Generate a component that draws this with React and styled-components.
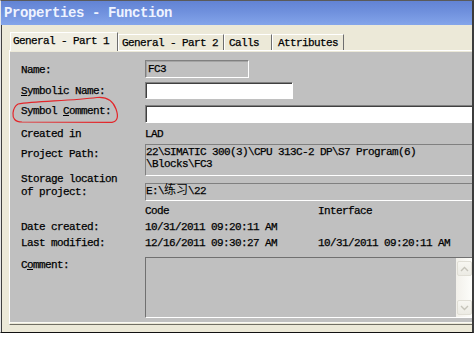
import React from 'react';
import styled, { createGlobalStyle } from 'styled-components';

const MONO = `"Liberation Mono", "Noto Sans CJK SC", monospace`;

const Global = createGlobalStyle`
  html, body { margin: 0; padding: 0; background: #fff; }
  body { font-family: ${MONO}; }
`;

const Window = styled.div`
  width: 474px;
  height: 333px;
  box-sizing: border-box;
  display: flex;
  flex-direction: column;
  border-top: 1px solid #5a5a5a;
  border-left: 1px solid #e6e6e6;
  border-right: 2px solid #3c3c3c;
  border-bottom: 1px solid #111;
`;

const TitleBar = styled.div`
  height: 24px;
  flex-shrink: 0;
  padding-left: 3px;
  background: linear-gradient(180deg, #6283d4 0%, #7192de 50%, #84a5ea 100%);
  color: #eef3ff;
  font-family: ${MONO};
  font-weight: bold;
  font-size: 14px;
  line-height: 24px;
  letter-spacing: -0.4px;
  white-space: pre;
`;

const Body = styled.div`
  flex: 1;
  display: flex;
  flex-direction: column;
  background: #ece9d8;
  border-left: 1px solid #404040;
  padding: 7px 0 7px 7px;
`;

const TabStrip = styled.div`
  display: flex;
  align-items: flex-end;
  height: 18px;
  padding-left: 1px;
  position: relative;
  z-index: 1;
  flex-shrink: 0;
`;

const Tab = styled.div`
  box-sizing: border-box;
  width: ${(p) => p.$w}px;
  height: ${(p) => (p.$active ? 19 : 16)}px;
  margin-bottom: ${(p) => (p.$active ? -1 : 0)}px;
  padding: 2px 0 0 ${(p) => p.$pl}px;
  background: ${(p) => (p.$active ? '#f0eee3' : '#ece9d8')};
  border-top: 1px solid #fff;
  border-left: 1px solid #fff;
  border-right: 1px solid #6e6e6e;
  font-size: 11px;
  line-height: 12px;
  letter-spacing: -0.6px;
  -webkit-text-stroke: 0.25px #000;
  color: #000;
  white-space: pre;
`;

const Panel = styled.div`
  flex: 1;
  display: flex;
  flex-direction: column;
  background: #ece9d8;
  border-top: 1px solid #fff;
  border-left: 1px solid #fff;
  border-bottom: 1px solid #716f64;
  padding: 1px 0;
`;

const Page = styled.div`
  position: relative;
  flex: 1;
  display: flex;
  flex-direction: column;
  background: #c0c0c0;
  border-bottom: 1px solid #fbfaf4;
  padding: 8px 0 0 11px;
  -webkit-text-stroke: 0.25px #000;
`;

const Row = styled.div`
  display: grid;
  grid-template-columns: 124px 1fr;
  height: ${(p) => p.$h}px;
  margin-top: ${(p) => p.$mt || 0}px;
  flex-shrink: 0;
`;

const Text = styled.div`
  margin-top: ${(p) => p.$mt || 0}px;
  font-size: 11px;
  line-height: ${(p) => p.$lh || 12}px;
  letter-spacing: -0.6px;
  color: #000;
  white-space: pre;
`;

const Acc = styled.span`
  text-decoration: underline;
  text-underline-offset: 1px;
`;

const Cjk = styled.span`
  font-size: 12px;
  letter-spacing: 0;
  -webkit-text-stroke: 0;
`;

const Edit = styled.div`
  box-sizing: border-box;
  height: ${(p) => p.$h}px;
  width: ${(p) => (p.$w ? `${p.$w}px` : 'auto')};
  background: ${(p) => (p.$disabled ? '#c0c0c0' : '#fff')};
  border: 1px solid;
  border-color: #808080 #fff #fff #808080;
  ${(p) => (p.$open ? 'border-right: none;' : '')}
  box-shadow: inset 1px 1px 0 ${(p) => (p.$disabled ? '#a4a4a4' : '#404040')};
  padding: 2px 0 0 2px;
  font-size: 11px;
  line-height: 12px;
  letter-spacing: -0.6px;
  color: #000;
  white-space: pre;
`;

const ReadBox = styled.div`
  box-sizing: border-box;
  height: ${(p) => p.$h}px;
  margin-top: ${(p) => p.$mt || 0}px;
  border-top: 1px solid #808080;
  border-left: 1px solid #808080;
  border-bottom: 1px solid #fff;
  padding-top: 1px;
  font-size: 11px;
  line-height: 12px;
  letter-spacing: -0.6px;
  color: #000;
  white-space: pre;
`;

const Columns = styled.div`
  display: grid;
  grid-template-columns: 173px 1fr;
`;

const CommentBox = styled.div`
  box-sizing: border-box;
  height: 61px;
  display: flex;
  justify-content: flex-end;
  border-top: 1px solid #707070;
  border-left: 1px solid #707070;
  border-bottom: 1px solid #fff;
  background: #c0c0c0;
`;

const ScrollBar = styled.div`
  width: 16px;
  box-sizing: border-box;
  display: flex;
  flex-direction: column;
  justify-content: space-between;
  align-items: center;
  padding: 3px 0 2px;
  background: linear-gradient(90deg, #f2f0ea, #fdfdfa);
`;

const ScrollBtn = styled.div`
  width: 15px;
  height: 15px;
  box-sizing: border-box;
  border: 1px solid #e0ded5;
  border-radius: 2px;
  background: linear-gradient(180deg, #f7f6f1, #ecebe4);
  display: flex;
  align-items: center;
  justify-content: center;
`;

const Annotation = styled.svg`
  position: absolute;
  left: 0;
  top: 0;
  pointer-events: none;
`;

const Chevron = ({ up }) => (
  <svg width="9" height="6" viewBox="0 0 9 6">
    <path
      d={up ? 'M1 5 L4.5 1.5 L8 5' : 'M1 1 L4.5 4.5 L8 1'}
      fill="none"
      stroke="#c6c4ba"
      strokeWidth="1.4"
    />
  </svg>
);

const tabs = [
  { label: 'General - Part 1', w: 108, pl: 2, active: true },
  { label: 'General - Part 2', w: 106, pl: 3 },
  { label: 'Calls', w: 48, pl: 4 },
  { label: 'Attributes', w: 72, pl: 5 },
];

export default function App() {
  return (
    <>
      <Global />
      <Window>
        <TitleBar>Properties - Function</TitleBar>
        <Body>
          <TabStrip>
            {tabs.map((t) => (
              <Tab key={t.label} $w={t.w} $pl={t.pl} $active={t.active}>
                {t.label}
              </Tab>
            ))}
          </TabStrip>
          <Panel>
            <Page>
              <Row $h={18}>
                <Text $mt={4}>Name:</Text>
                <Edit $h={18} $w={104} $disabled>FC3</Edit>
              </Row>
              <Row $h={17} $mt={4}>
                <Text $mt={3}>
                  <Acc>S</Acc>ymbolic Name:
                </Text>
                <Edit $h={17} $w={148} />
              </Row>
              <Row $h={18} $mt={6}>
                <Text $mt={0}>
                  Symbol <Acc>C</Acc>omment:
                </Text>
                <Edit $h={18} $open />
              </Row>
              <Row $h={21}>
                <Text $mt={5}>Created in</Text>
                <Text $mt={5}>LAD</Text>
              </Row>
              <Row $h={32}>
                <Text $mt={4}>Project Path:</Text>
                <ReadBox $h={32}>
                  {'22\\SIMATIC 300(3)\\CPU 313C-2 DP\\S7 Program(6)\n\\Blocks\\FC3'}
                </ReadBox>
              </Row>
              <Row $h={26}>
                <Text $mt={-3} $lh={12.5}>
                  {'Storage location\nof project:'}
                </Text>
                <ReadBox $h={18} $mt={7}>
                  {'E:\\'}
                  <Cjk>练习</Cjk>
                  {'\\22'}
                </ReadBox>
              </Row>
              <Row $h={17}>
                <span />
                <Columns>
                  <Text $mt={3}>Code</Text>
                  <Text $mt={3}>Interface</Text>
                </Columns>
              </Row>
              <Row $h={16}>
                <Text $mt={2}>Date created:</Text>
                <Columns>
                  <Text $mt={2}>10/31/2011 09:20:11 AM</Text>
                  <span />
                </Columns>
              </Row>
              <Row $h={17}>
                <Text $mt={2}>Last modified:</Text>
                <Columns>
                  <Text $mt={2}>12/16/2011 09:30:27 AM</Text>
                  <Text $mt={2}>10/31/2011 09:20:11 AM</Text>
                </Columns>
              </Row>
              <Row $h={61} $mt={5}>
                <Text $mt={2}>
                  C<Acc>o</Acc>mment:
                </Text>
                <CommentBox>
                  <ScrollBar>
                    <ScrollBtn>
                      <Chevron up />
                    </ScrollBtn>
                    <ScrollBtn>
                      <Chevron />
                    </ScrollBtn>
                  </ScrollBar>
                </CommentBox>
              </Row>
              <Annotation width="120" height="80" viewBox="10 52 120 80">
                <path
                  d="M18 104 C 35 101, 70 101, 97 97.5 C 107 96.5, 113 101, 116 109 C 118.5 116, 118 121, 112 122.3 L 22 122 C 15 121.8, 12.5 118.5, 13 113 C 13.4 108.5, 15 106, 18 104"
                  fill="none"
                  stroke="#e3262a"
                  strokeWidth="1.2"
                />
              </Annotation>
            </Page>
          </Panel>
        </Body>
      </Window>
    </>
  );
}
